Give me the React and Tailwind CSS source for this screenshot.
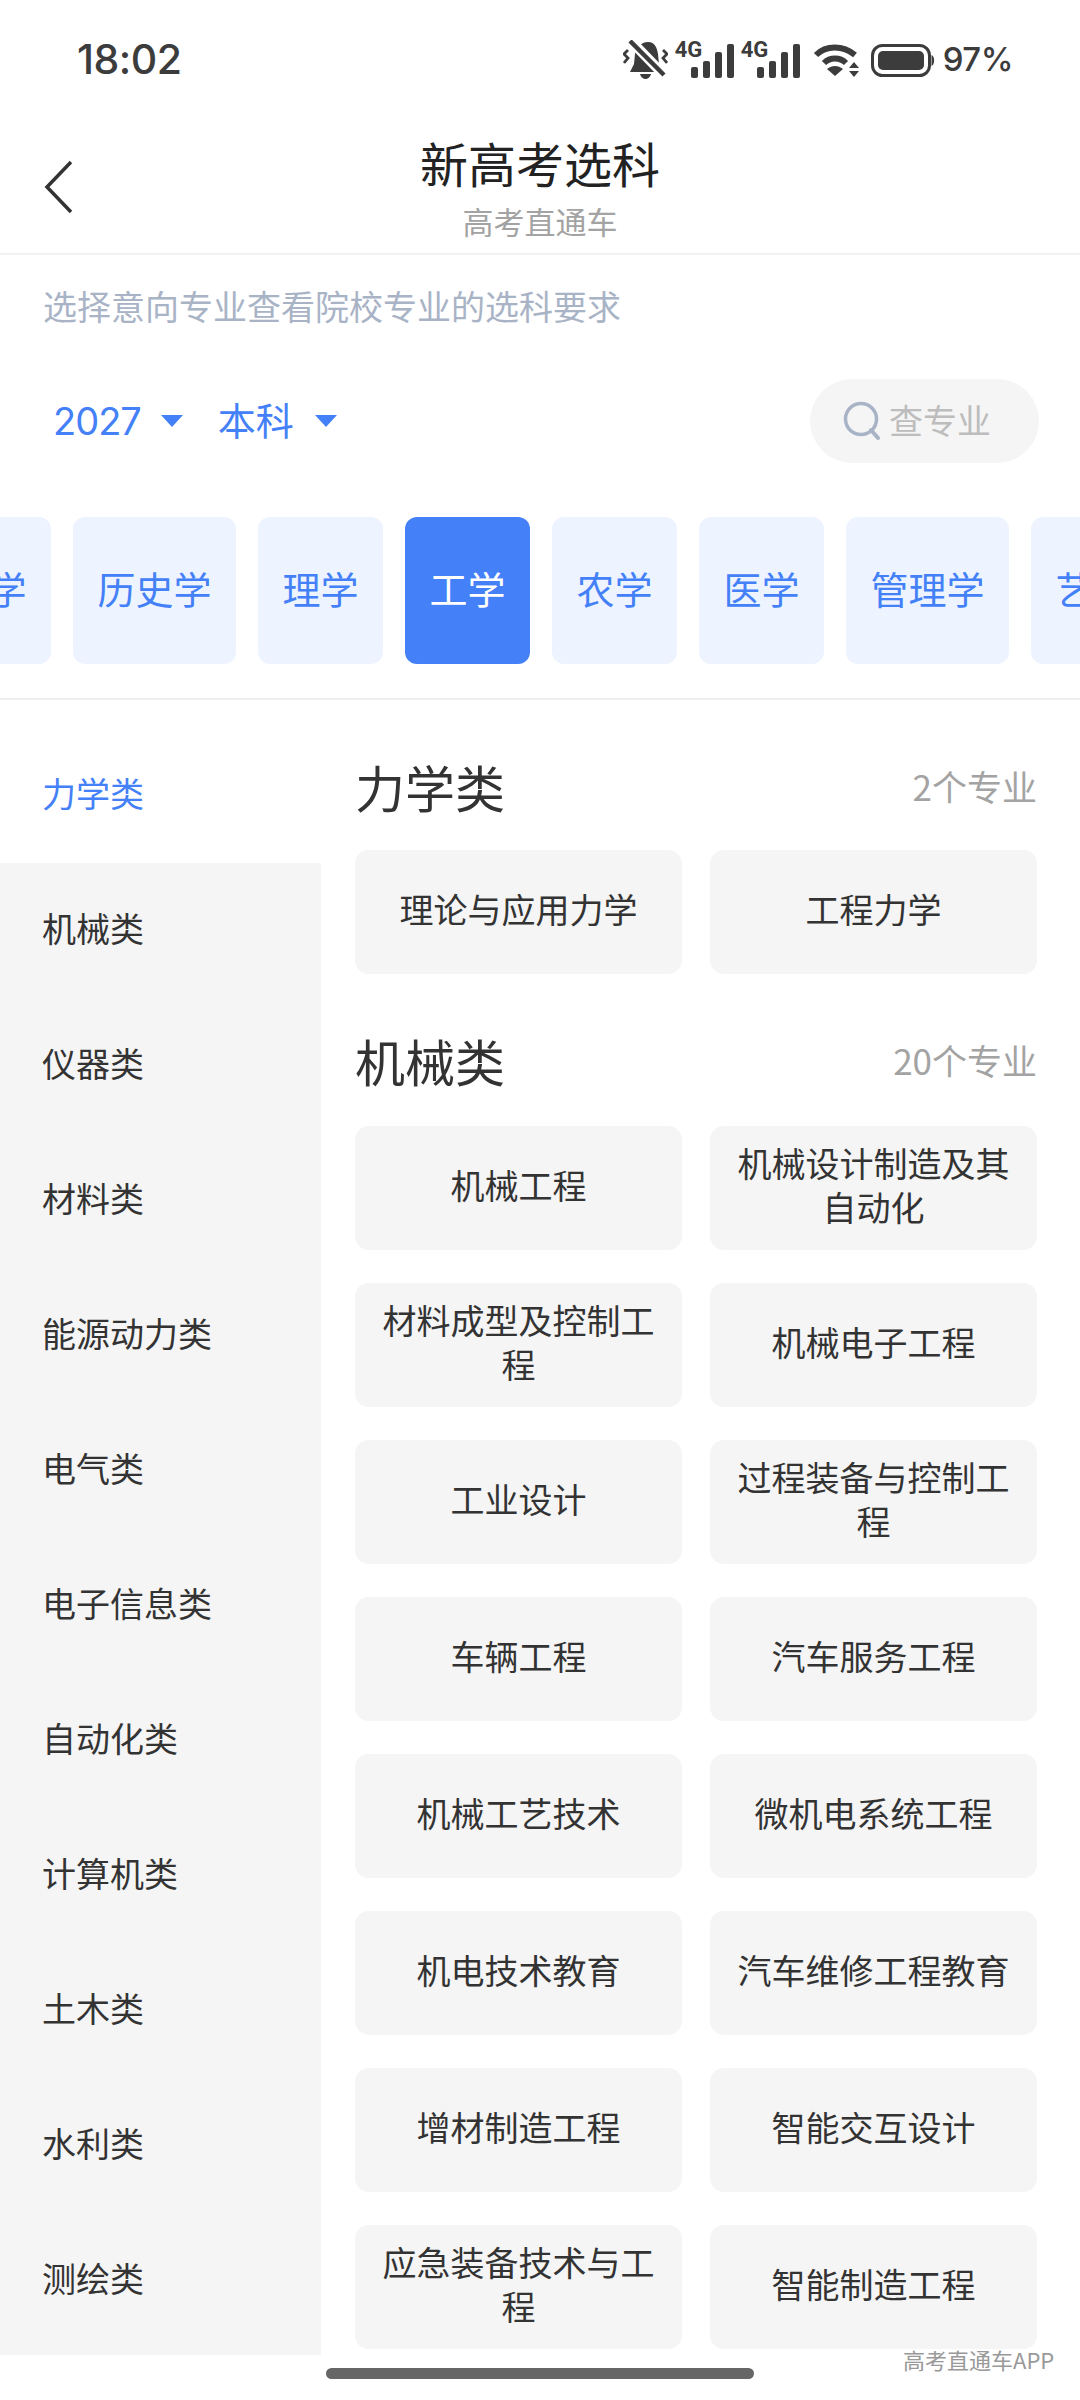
const FONT = "font-['Noto_Sans_CJK_SC','Noto_Sans',sans-serif]";

const tabs = ["文学", "历史学", "理学", "工学", "农学", "医学", "管理学", "艺术学"];
const side = ["力学类", "机械类", "仪器类", "材料类", "能源动力类", "电气类", "电子信息类", "自动化类", "计算机类", "土木类", "水利类", "测绘类"];
const mech = [
  "机械工程", "机械设计制造及其自动化", "材料成型及控制工程", "机械电子工程", "工业设计", "过程装备与控制工程",
  "车辆工程", "汽车服务工程", "机械工艺技术", "微机电系统工程", "机电技术教育", "汽车维修工程教育",
  "增材制造工程", "智能交互设计", "应急装备技术与工程", "智能制造工程",
];

function Bell() {
  return (
    <svg width="45" height="40" viewBox="0 0 45 40" fill="#3c3c3c">
      <path d="M25 2 C32 2 34 8 35 14 L36 24 L39 32 H7 L11 24 L12 14 C13 8 18 2 25 2 Z" />
      <path d="M17 34 H28 C27 38 24 39 22.500 39 C21 39 18 38 17 34 Z" />
      <path d="M5 -2 L43 37" stroke="#fff" strokeWidth="10" />
      <path d="M7 1 L41 35" stroke="#3c3c3c" strokeWidth="4.500" />
      <path d="M5 10 L1 14 L5 18 L1 23" fill="none" stroke="#3c3c3c" strokeWidth="2.800" />
      <path d="M40 10 L44 14 L40 18 L44 23" fill="none" stroke="#3c3c3c" strokeWidth="2.800" />
    </svg>
  );
}

function Signal({ className }) {
  return (
    <div className={`relative w-[59px] h-[40px] shrink-0 ${className}`}>
      <span className="absolute left-0 top-[-3px] text-[22px] leading-[26px] font-bold text-[#3c3c3c] font-['Roboto',sans-serif]">4G</span>
      <svg className="absolute left-0 top-0" width="59" height="40" viewBox="0 0 59 40" fill="#3c3c3c">
        <rect x="16" y="27" width="7" height="11" rx="2" />
        <rect x="28" y="21" width="7" height="17" rx="2" />
        <rect x="40" y="12" width="7" height="26" rx="2" />
        <rect x="52" y="4" width="7" height="34" rx="2" />
      </svg>
    </div>
  );
}

function Wifi() {
  return (
    <svg className="ml-[13px]" width="47" height="34" viewBox="0 0 47 34" fill="none">
      <path d="M3 12 C13 2 30 2 42 12" stroke="#3c3c3c" strokeWidth="6" />
      <path d="M11 20 C17 14 27 14 33 20" stroke="#3c3c3c" strokeWidth="6" />
      <path d="M14 26 C19 22 25 22 30 26 L22 33 Z" fill="#3c3c3c" />
      <path d="M41 19 L46 25 H36 Z M36 28 H46 L41 34 Z" fill="#3c3c3c" />
    </svg>
  );
}

function Battery() {
  return (
    <svg className="ml-[11px]" width="64" height="33" viewBox="0 0 64 33">
      <rect x="1.500" y="1.500" width="57" height="30" rx="10" fill="none" stroke="#3c3c3c" strokeWidth="3" />
      <rect x="7" y="7" width="46" height="19" rx="5" fill="#3c3c3c" />
      <path d="M60.500 11 C64 12 64 21 60.500 22 Z" fill="#3c3c3c" />
    </svg>
  );
}

function Card({ children }) {
  return (
    <div className="h-[124px] rounded-[14px] bg-[#f5f5f5] flex items-center justify-center text-center px-[24px] pb-[6px] text-[34px] leading-[44px] text-[#333333]">
      {children}
    </div>
  );
}

function Heading({ title, count }) {
  return (
    <div className="flex items-center justify-between h-[60px] pb-[6px]">
      <span className="text-[50px] leading-[60px] text-[#333333]">{title}</span>
      <span className="text-[35px] leading-[60px] text-[#a3a3a3]">{count}</span>
    </div>
  );
}

export default function App() {
  return (
    <div className={`relative w-[1080px] h-[2400px] bg-white overflow-hidden ${FONT}`}>
      {/* status bar */}
      <div className="h-[120px] flex items-center justify-between pl-[77px] pr-[67px]">
        <span className="text-[41px] font-medium text-[#3c3c3c] font-['Inter',sans-serif] tracking-[-0.5px]">18:02</span>
        <div className="flex items-center">
          <Bell />
          <Signal className="ml-[7px]" />
          <Signal className="ml-[7px]" />
          <Wifi />
          <Battery />
          <span className="ml-[8px] text-[33px] font-medium text-[#3c3c3c] font-['Inter',sans-serif] tracking-[-0.5px]">97%</span>
        </div>
      </div>

      {/* nav */}
      <div className="relative h-[135px] border-b-2 border-[#f2f2f2] flex flex-col items-center">
        <svg className="absolute left-[44px] top-[40px]" width="30" height="54" viewBox="0 0 30 54" fill="none">
          <path d="M27 2 L3 27 L27 52" stroke="#333333" strokeWidth="3.500" />
        </svg>
        <span className="text-[48px] leading-[60px] mt-[12px] text-[#222222]">新高考选科</span>
        <span className="text-[31px] leading-[40px] mt-[9px] text-[#a3a3a3]">高考直通车</span>
      </div>

      {/* intro */}
      <div className="pl-[43px] pt-[31px] text-[34px] leading-[40px] text-[#a9b3c6]">选择意向专业查看院校专业的选科要求</div>

      {/* filters */}
      <div className="mt-[53px] flex items-center justify-between pl-[53px] pr-[41px] h-[84px]">
        <div className="flex items-center text-[#4480f7] text-[38px]">
          <span className="font-['Inter',sans-serif] text-[38px] tracking-[-1px]">2027</span>
          <svg className="ml-[20px]" width="22" height="14" viewBox="0 0 22 14"><path d="M0 1 H22 L11 13 Z" fill="#4480f7" /></svg>
          <span className="ml-[35px] mb-[6px]">本科</span>
          <svg className="ml-[21px]" width="22" height="14" viewBox="0 0 22 14"><path d="M0 1 H22 L11 13 Z" fill="#4480f7" /></svg>
        </div>
        <div className="w-[229px] h-[84px] rounded-full bg-[#f5f5f5] flex items-center pl-[33px]">
          <svg width="38" height="40" viewBox="0 0 38 40" fill="none">
            <circle cx="18" cy="18" r="15.500" stroke="#a9b3c6" strokeWidth="3.500" />
            <path d="M28 29 L35 37" stroke="#a9b3c6" strokeWidth="4" strokeLinecap="round" />
          </svg>
          <span className="ml-[8px] mb-[3px] text-[34px] text-[#bdbdbd]">查专业</span>
        </div>
      </div>

      {/* tabs */}
      <div className="mt-[54px] h-[147px] overflow-hidden">
        <div className="flex gap-[22px] ml-[-74px] w-max">
          {tabs.map((t) => (
            <div key={t} className={`h-[147px] px-[24.500px] pb-[6px] rounded-[12px] flex items-center text-[38px] ${t === "工学" ? "bg-[#4480f7] text-white" : "bg-[#edf4ff] text-[#4480f7]"}`}>
              {t}
            </div>
          ))}
        </div>
      </div>

      <div className="mt-[34px] h-[2px] bg-[#eeeeee]" />

      {/* body */}
      <div className="flex mt-[28px]">
        <div className="w-[321px] shrink-0">
          {side.map((s, i) => (
            <div key={s} className={`h-[135px] flex items-center pl-[42px] pb-[6px] text-[34px] ${i === 0 ? "bg-white text-[#4480f7]" : "bg-[#f5f5f5] text-[#333333]"}`}>
              {s}
            </div>
          ))}
          <div className="h-[7px] bg-[#f5f5f5]" />
        </div>
        <div className="flex-1 pl-[34px] pr-[43px] pt-[31px]">
          <Heading title="力学类" count="2个专业" />
          <div className="grid grid-cols-2 gap-x-[28px] gap-y-[33px] mt-[31px]">
            <Card>理论与应用力学</Card>
            <Card>工程力学</Card>
          </div>
          <div className="mt-[59px]">
            <Heading title="机械类" count="20个专业" />
          </div>
          <div className="grid grid-cols-2 gap-x-[28px] gap-y-[33px] mt-[33px]">
            {mech.map((m) => (
              <Card key={m}>{m}</Card>
            ))}
          </div>
        </div>
      </div>

      {/* watermark + home */}
      <span className="absolute left-[903px] top-[2345px] text-[22px] leading-[28px] text-[#999999]">高考直通车APP</span>
      <div className="absolute left-[326px] top-[2368px] w-[428px] h-[11px] rounded-full bg-[#666666]" />
    </div>
  );
}
